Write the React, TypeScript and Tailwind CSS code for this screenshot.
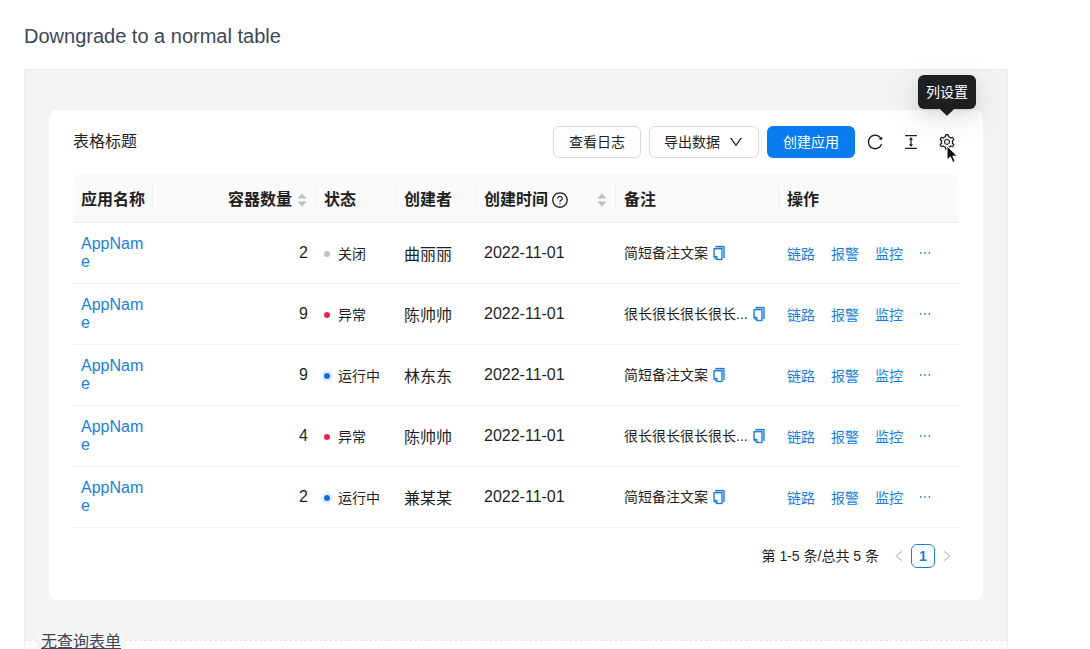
import React from "react";
import {
  AiFillCaretDown,
  AiFillCaretUp,
  AiOutlineColumnHeight,
  AiOutlineCopy,
  AiOutlineDown,
  AiOutlineEllipsis,
  AiOutlineLeft,
  AiOutlineQuestionCircle,
  AiOutlineReload,
  AiOutlineRight,
  AiOutlineSetting,
} from "react-icons/ai";

const rows = [
  { count: 2, status: "关闭", dot: "gray", creator: "曲丽丽", note: "简短备注文案" },
  { count: 9, status: "异常", dot: "red", creator: "陈帅帅", note: "很长很长很长很长..." },
  { count: 9, status: "运行中", dot: "blue", creator: "林东东", note: "简短备注文案" },
  { count: 4, status: "异常", dot: "red", creator: "陈帅帅", note: "很长很长很长很长..." },
  { count: 2, status: "运行中", dot: "blue", creator: "兼某某", note: "简短备注文案" },
];

function Sorter() {
  return (
    <span className="flex flex-col text-[#bfbfbf] text-xs leading-[7px]">
      <AiFillCaretUp />
      <AiFillCaretDown className="-mt-[4px]" />
    </span>
  );
}

function Dot({ kind }: { kind: string }) {
  if (kind === "blue") {
    return <span className="w-1.5 h-1.5 rounded-full bg-[#0f6fe0] ring-[3px] ring-[#e6f0fc]" />;
  }
  if (kind === "red") {
    return <span className="w-1.5 h-1.5 rounded-full bg-[#e8274f]" />;
  }
  return <span className="w-1.5 h-1.5 rounded-full bg-[#bfbfbf]" />;
}

function Th({ children, right, last, first }: { children: React.ReactNode; right?: boolean; last?: boolean; first?: boolean }) {
  return (
    <th className={`relative px-2 pt-1 h-12 border-b border-[#f0f0f0] font-semibold text-base ${right ? "text-right" : "text-left"} ${first ? "rounded-tl-lg" : ""} ${last ? "rounded-tr-lg" : ""}`}>
      {children}
      {!last && <span className="absolute right-0 top-3 h-6 w-px bg-[#efefef]" />}
    </th>
  );
}

export default function App() {
  return (
    <div className="relative h-[649px] w-[1090px] overflow-hidden bg-white pl-6 pr-[82px] text-[#1f1f1f] font-['Liberation_Sans','Noto_Sans_CJK_SC',sans-serif]">
      <h2 className="pt-6 pb-[21px] text-xl leading-6 text-[#3c4858]">Downgrade to a normal table</h2>

      <div className="h-[571px] border border-b-0 border-[#ececec] bg-[#f3f3f3] pt-10 pl-6 pr-6">
        <div className="h-[490px] rounded-lg bg-white px-6 pt-4">
          <div className="flex h-8 items-center justify-between">
            <div className="text-base">表格标题</div>
            <div className="flex items-center text-sm">
              <button className="h-8 w-[88px] rounded-md border border-[#d9d9d9] bg-white">查看日志</button>
              <button className="ml-2 flex h-8 w-[110px] items-center justify-center gap-2 rounded-md border border-[#d9d9d9] bg-white">
                导出数据
                <AiOutlineDown className="text-base" />
              </button>
              <button className="ml-2 h-8 w-[88px] rounded-md bg-[#0a7cf0] text-white">创建应用</button>
              <span className="ml-[11px] flex gap-[18px] pr-[3px] text-lg">
                <AiOutlineReload />
                <AiOutlineColumnHeight />
                <AiOutlineSetting />
              </span>
            </div>
          </div>

          <table className="mt-4 w-[886px] table-fixed border-collapse">
            <colgroup>
              <col className="w-20" />
              <col className="w-[163px]" />
              <col className="w-20" />
              <col className="w-20" />
              <col className="w-[140px]" />
              <col className="w-[163px]" />
              <col className="w-[180px]" />
            </colgroup>
            <thead className="bg-[#fafafa]">
              <tr>
                <Th first>应用名称</Th>
                <Th right>
                  <span className="flex items-center justify-end gap-1">
                    容器数量
                    <Sorter />
                  </span>
                </Th>
                <Th>状态</Th>
                <Th>创建者</Th>
                <Th>
                  <span className="flex items-center justify-between">
                    <span className="flex items-center gap-[3px]">
                      创建时间
                      <AiOutlineQuestionCircle className="text-lg font-normal" />
                    </span>
                    <Sorter />
                  </span>
                </Th>
                <Th>备注</Th>
                <Th last>操作</Th>
              </tr>
            </thead>
            <tbody>
              {rows.map((row, i) => (
                <tr key={i} className="h-[61px] border-b border-[#f0f0f0]">
                  <td className="px-2 py-3 text-base leading-[18px] text-[#1b7fd8] break-all">AppName</td>
                  <td className="px-2 text-right text-base">{row.count}</td>
                  <td className="px-2">
                    <span className="flex items-center gap-2 pt-0.5 text-sm">
                      <Dot kind={row.dot} />
                      {row.status}
                    </span>
                  </td>
                  <td className="px-2 pt-1 text-base">{row.creator}</td>
                  <td className="px-2 text-base">2022-11-01</td>
                  <td className="px-2 text-sm">
                    <span className="flex items-center gap-[3px]">
                      {row.note}
                      <AiOutlineCopy className="text-base text-[#1b7fd8]" stroke="currentColor" strokeWidth={20} />
                    </span>
                  </td>
                  <td className="px-2 pt-0.5 text-sm text-[#1b7fd8]">
                    <span className="flex items-center gap-3.5">
                      <span className="mr-0.5">链路</span>
                      <span className="mr-0.5">报警</span>
                      <span>监控</span>
                      <AiOutlineEllipsis className="-mt-0.5 text-base" />
                    </span>
                  </td>
                </tr>
              ))}
            </tbody>
          </table>

          <div className="mt-4 flex h-6 items-center justify-end pr-[5px] text-sm">
            <span>第 1-5 条/总共 5 条</span>
            <AiOutlineLeft className="ml-[13px] text-sm text-[#bfbfbf]" />
            <span className="ml-[5px] flex h-6 w-6 items-center justify-center rounded-md border border-[#1b7fd8] font-semibold text-[#1b7fd8]">1</span>
            <AiOutlineRight className="ml-[5px] text-sm text-[#bfbfbf]" />
          </div>
        </div>
      </div>

      <div className="h-2.5 border-x border-t border-dashed border-x-[#ececec] border-t-[#e4e4e4]" />

      <span className="absolute left-[37px] top-[632px] bg-[#f6f6f6] px-1 text-base leading-5 text-[#3c4858] underline">无查询表单</span>

      {/* tooltip over the settings icon */}
      <div className="absolute left-[918px] top-[75px] flex h-[34px] w-[58px] items-center justify-center rounded-md bg-[#1f1f1f] text-sm text-white shadow-[0_6px_16px_rgba(0,0,0,0.08),0_3px_6px_-4px_rgba(0,0,0,0.12),0_9px_28px_8px_rgba(0,0,0,0.05)]">
        列设置
        <span className="absolute -bottom-[5px] left-[24px] h-2.5 w-2.5 rotate-45 rounded-[1px] bg-[#1f1f1f]" />
      </div>

      {/* mouse pointer */}
      <svg className="absolute left-[945px] top-[145px]" width="15" height="20" viewBox="0 0 15 20">
        <path d="M2 1v14l3.4-3 2.4 5.4 2.4-1-2.4-5.3H12.4z" fill="#111" stroke="#fff" strokeWidth="1" />
      </svg>
    </div>
  );
}
